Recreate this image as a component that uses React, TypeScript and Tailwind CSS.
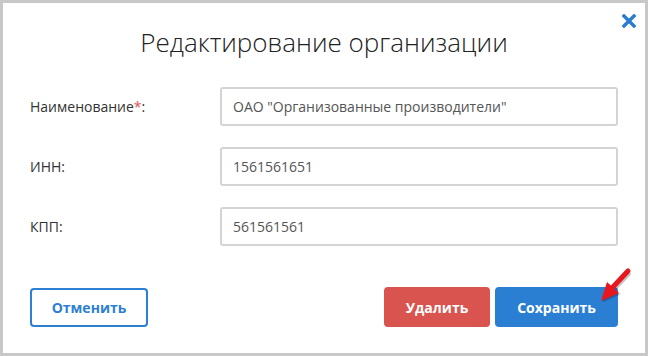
import React from "react";

export default function App() {
  const font = { fontFamily: '"Open Sans", "Noto Sans", sans-serif' };
  return (
    <div
      className="relative w-[648px] h-[356px] bg-white border-[3px] border-[#c8c8c8] px-[27px] text-[#333]"
      style={font}
    >
      <button className="absolute right-[9px] top-[10px] w-[15px] h-[15px] flex items-center justify-center">
        <svg width="14" height="14" viewBox="0 0 14 14">
          <path d="M2 2 L12 12 M12 2 L2 12" stroke="#2b7dd0" strokeWidth="3.4" strokeLinecap="square" />
        </svg>
      </button>

      <h1 className="text-center text-[26px] font-light leading-[34px] pt-[22px] text-[#222]">
        Редактирование организации
      </h1>

      <div className="mt-[28px] flex flex-col gap-[21px]">
        <Row label={<>Наименование<span className="text-[#d9534f]">*</span>:</>} value='ОАО "Организованные производители"' />
        <Row label="ИНН:" value="1561561651" />
        <Row label="КПП:" value="561561561" />
      </div>

      <div className="mt-[41px] flex items-center">
        <button className="h-[39px] w-[118px] rounded-[4px] border-2 border-[#2d7fd3] text-[#2d7fd3] font-bold text-[14px]">
          Отменить
        </button>
        <div className="flex-1" />
        <button className="h-[40px] w-[106px] rounded-[4px] bg-[#d9534f] text-white font-bold text-[14px]">
          Удалить
        </button>
        <button className="ml-[5px] h-[40px] w-[123px] rounded-[4px] bg-[#2a7fd2] text-white font-bold text-[14px]">
          Сохранить
        </button>
      </div>

      <svg className="absolute left-[590px] top-[262px]" width="42" height="42" viewBox="0 0 42 42">
        <g transform="translate(1.5,1.5)" opacity="0.22">
          <path d="M35 6 L19 23" stroke="#000" strokeWidth="5" />
          <path d="M8 36 L14 17 L26 28 Z" fill="#000" />
        </g>
        <path d="M35 6 L19 23" stroke="#e8161e" strokeWidth="5" strokeLinecap="round" />
        <path d="M8 36 L14 17 L26 28 Z" fill="#e8161e" />
      </svg>
    </div>
  );
}

function Row({ label, value }: { label: React.ReactNode; value: string }) {
  return (
    <div className="flex items-center h-[39px]">
      <div className="w-[190px] text-[14px]">{label}</div>
      <div className="flex-1 h-[39px] rounded-[3px] border-2 border-[#d4d4d4] px-[11px] flex items-center text-[14px] text-[#555]">
        {value}
      </div>
    </div>
  );
}
